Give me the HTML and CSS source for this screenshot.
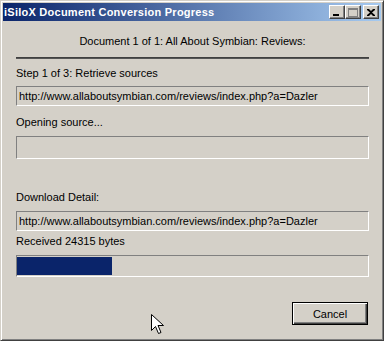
FILE: index.html
```html
<!DOCTYPE html>
<html>
<head>
<meta charset="utf-8">
<link rel="stylesheet" href="styles.css">
</head>
<body>
<div class="window">
  <div class="titlebar">
    <span class="title">iSiloX Document Conversion Progress</span>
    <div class="tbuttons">
      <span class="tbtn"><svg width="8" height="7" viewBox="0 0 8 7"><rect x="0" y="5" width="6" height="2" fill="#000"/></svg></span>
      <span class="tbtn"><svg width="10" height="9" viewBox="0 0 10 9"><rect x="0.5" y="0.5" width="9" height="8" fill="none" stroke="#808080"/><rect x="0" y="1" width="10" height="1" fill="#808080"/></svg></span>
      <span class="tbtn close"><svg width="8" height="7" viewBox="0 0 8 7"><path d="M0 0h2l2 2 2-2h2v1L5 3.5 8 6v1H6L4 5 2 7H0V6l3-2.5L0 1z" fill="#000"/></svg></span>
    </div>
  </div>
  <div class="content">
    <div class="doc">Document 1 of 1: All About Symbian: Reviews:</div>
    <div class="sep"></div>
    <div class="label l-step">Step 1 of 3: Retrieve sources</div>
    <div class="field f1">http://www.allaboutsymbian.com/reviews/index.php?a=Dazler</div>
    <div class="label l-open">Opening source...</div>
    <div class="field f2"></div>
    <div class="label l-dl">Download Detail:</div>
    <div class="field f3">http://www.allaboutsymbian.com/reviews/index.php?a=Dazler</div>
    <div class="label l-rec">Received 24315 bytes</div>
    <div class="progress"><div class="fill" style="width:95px"></div></div>
    <div class="btnrow"><button class="btn">Cancel</button></div>
  </div>
  <svg class="cursor" width="13" height="21" viewBox="0 0 13 21"><path d="M0.5 0.5v16l4-4 3 7 2.5-1-3-7h5.5z" fill="#fff" stroke="#000" stroke-width="1"/></svg>
</div>
</body>
</html>
```
FILE: styles.css
```css
* { box-sizing: border-box; }
html, body { margin: 0; padding: 0; background: #d4d0c8; }
body { font-family: "Liberation Sans", Arial, sans-serif; font-size: 11px; color: #000; }
.window {
  position: relative;
  width: 384px;
  height: 341px;
  background: #d4d0c8;
  border: 1px solid;
  border-color: #d4d0c8 #404040 #404040 #d4d0c8;
  box-shadow: inset 1px 1px 0 #fff, inset -1px -1px 0 #808080;
  padding: 2px;
  display: flex;
  flex-direction: column;
}
.titlebar {
  height: 18px;
  background: linear-gradient(to right, #0a246a, #a6caf0);
  display: flex;
  align-items: center;
  justify-content: space-between;
  padding: 0 2px 0 1px;
}
.title { color: #fff; font-weight: bold; font-size: 11px; letter-spacing: 0.25px; }
.tbuttons { display: flex; align-items: center; }
.tbtn {
  width: 16px; height: 14px;
  background: #d4d0c8;
  border: 1px solid;
  border-color: #fff #404040 #404040 #fff;
  box-shadow: inset -1px -1px 0 #808080;
  display: flex; align-items: center; justify-content: center;
}
.tbtn.close { margin-left: 2px; }
.content {
  flex: 1;
  padding: 0 12px 0 13px;
  display: flex;
  flex-direction: column;
}
.doc { text-align: center; line-height: 14px; margin-top: 13px; }
.sep { margin-top: 9px; height: 2px; border-top: 1px solid #404040; border-bottom: 1px solid #555; }
.label { line-height: 14px; }
.l-step { margin-top: 7px; }
.l-open { margin-top: 9px; }
.l-dl { margin-top: 31px; }
.l-rec { margin-top: 3px; }
.field {
  border: 1px solid;
  border-color: #808080 #fff #fff #808080;
  padding: 0 2px;
  display: flex; align-items: center;
  white-space: nowrap;
}
.f1 { margin-top: 6px; height: 20px; }
.f2 { margin-top: 7px; height: 23px; }
.f3 { margin-top: 7px; height: 20px; }
.progress {
  margin-top: 7px;
  height: 22px;
  border: 1px solid;
  border-color: #808080 #fff #fff #808080;
  padding: 1px 0;
}
.fill { height: 100%; background: #0a246a; }
.btnrow { margin-top: 25px; display: flex; justify-content: flex-end; padding-right: 1px; }
.btn {
  width: 76px; height: 23px;
  font-family: "Liberation Sans", Arial, sans-serif; font-size: 11px; color: #000;
  background: #d4d0c8;
  border: 1px solid #000;
  box-shadow: inset 1px 1px 0 #fff, inset -1px -1px 0 #404040, inset -2px -2px 0 #808080;
  padding: 0;
}
.cursor { position: absolute; left: 150px; top: 313px; }
```
